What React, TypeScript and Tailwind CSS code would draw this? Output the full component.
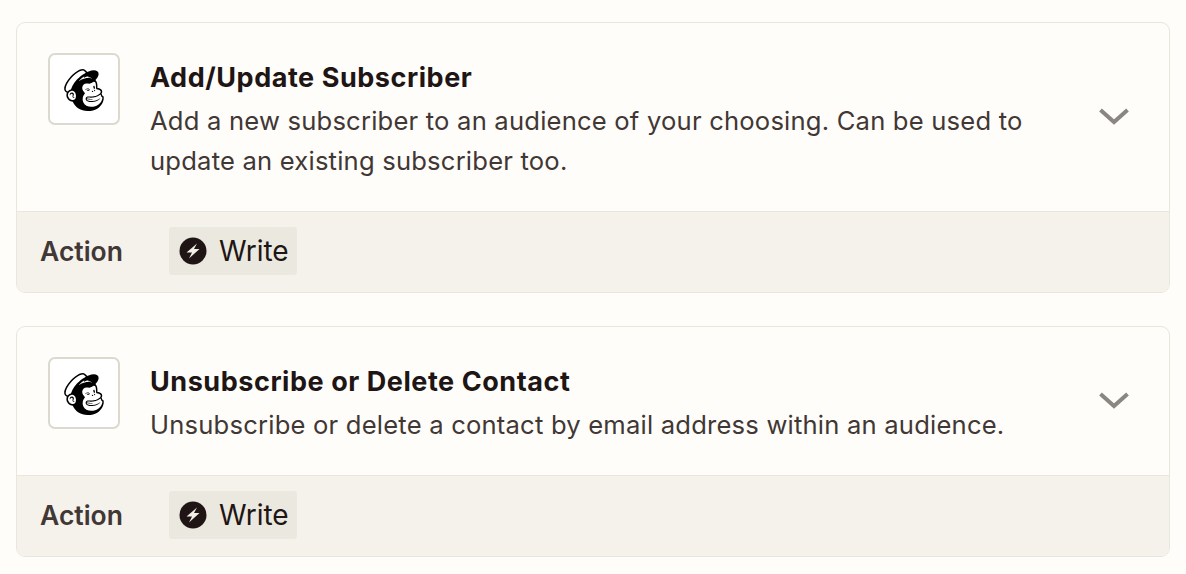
import { SiMailchimp } from 'react-icons/si';

const actions = [
  {
    id: 1,
    title: 'Add/Update Subscriber',
    description: 'Add a new subscriber to an audience of your choosing. Can be used to update an existing subscriber too.',
  },
  {
    id: 2,
    title: 'Unsubscribe or Delete Contact',
    description: 'Unsubscribe or delete a contact by email address within an audience.',
  },
];

const BoltIcon = () => (
  <svg width="28" height="28" viewBox="0 0 28 28" className="shrink-0">
    <circle cx="14" cy="14" r="13.5" fill="#201515" />
    <path d="M18 6.5 7.5 15.5H13L10 21.5l10.5-9.5H15z" fill="#f2efe7" />
  </svg>
);

const ActionCard = ({ title, description }: { title: string; description: string }) => (
  <div className="border-[1.5px] border-[#e9e6dc] rounded-[9px] overflow-hidden">
    <div className="flex items-center pl-[31px] pr-[39px] py-[30px]">
      <div className="self-start w-[72px] h-[72px] shrink-0 flex items-center justify-center bg-white border-2 border-[#dcd9cf] rounded-[7px]">
        <SiMailchimp className="text-[42px] text-black mt-[2px] -ml-[1px]" />
      </div>
      <div className="flex-1 ml-[30px] pr-[40px]">
        <div className="mt-[1px] text-[27px] leading-[47px] font-bold tracking-[0.55px] text-[#201515]">{title}</div>
        <p className="text-[25.6px] leading-[40px] tracking-[0.2px] text-[#413735]">{description}</p>
      </div>
      <svg width="32" height="20" viewBox="0 0 32 20" className="shrink-0" fill="none">
        <path d="M2.5 3 16 15 29.5 3" stroke="#8a8681" strokeWidth="4" />
      </svg>
    </div>
    <div className="flex items-start h-[81px] px-[23px] bg-[#f5f2eb] border-t-[1.5px] border-[#e9e6dc]">
      <span className="w-[129px] mt-[15px] leading-[48px] text-[26.5px] font-semibold text-[#413735]">Action</span>
      <span className="flex items-center gap-[12px] h-[48px] mt-[15px] pl-[10px] pr-[8px] rounded-[3px] bg-[#ebe8df] text-[28px] text-[#201515]">
        <BoltIcon />
        Write
      </span>
    </div>
  </div>
);

export default function App() {
  return (
    <div className="min-h-screen bg-[#fffdf9] pt-[22px] px-[16px] font-['Inter',sans-serif]">
      <div className="flex flex-col gap-[33px]">
        {actions.map((a) => (
          <ActionCard key={a.id} title={a.title} description={a.description} />
        ))}
      </div>
    </div>
  );
}
